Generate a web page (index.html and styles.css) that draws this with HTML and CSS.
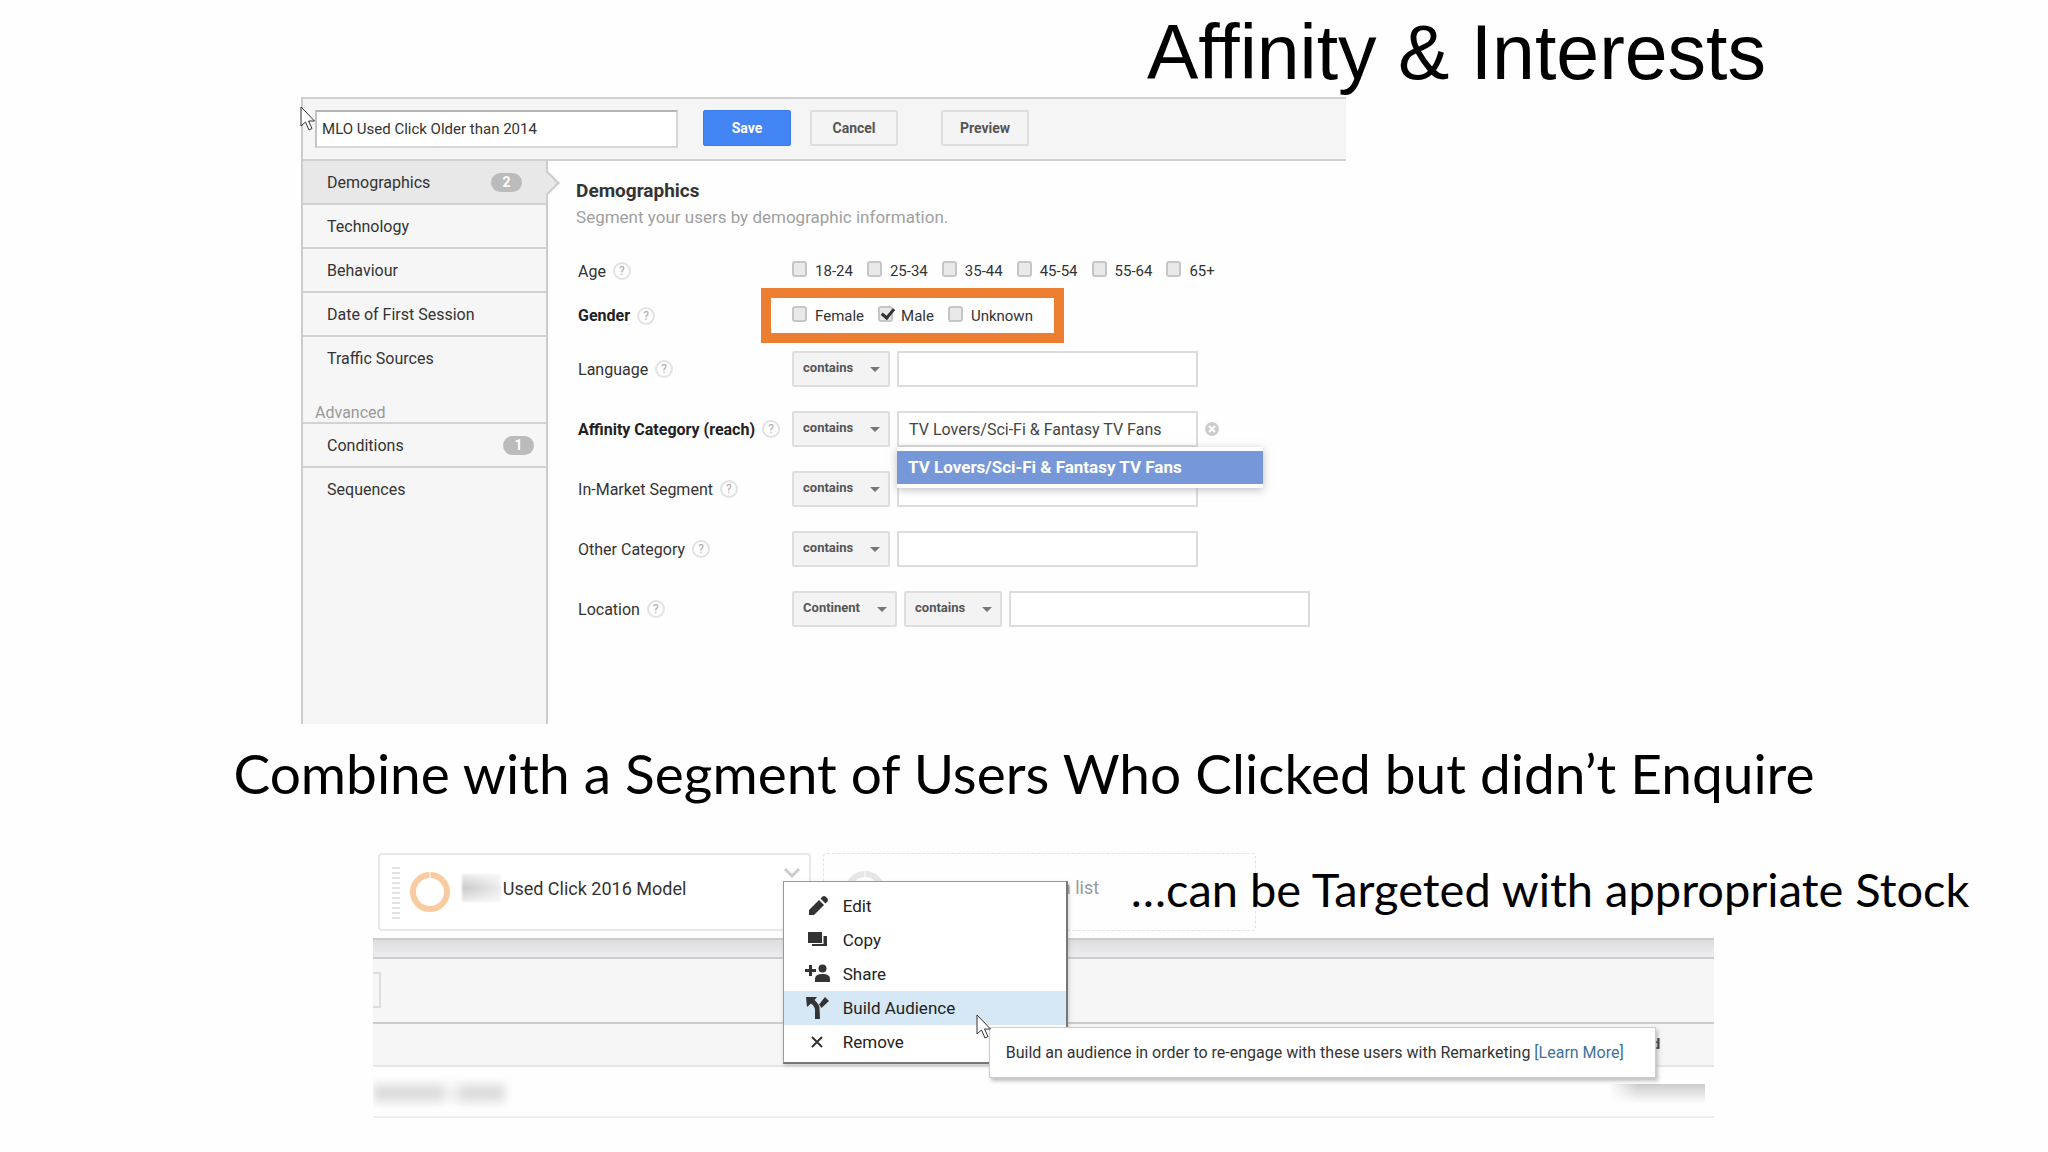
FILE: index.html
```html
<!DOCTYPE html>
<html lang="en">

<head>
    <meta charset="UTF-8">
    <meta name="viewport" content="width=device-width, initial-scale=1.0">
    <title>Affinity &amp; Interests</title>
    <link rel="stylesheet" href="styles.css">
</head>

<body>
    <h1 class="title">Affinity &amp; Interests</h1>

    <!-- segment builder -->
    <section class="builder">
        <svg class="pointer pointer-small" viewBox="0 0 16 25">
            <path d="M1 1v19l4.500-4 3.500 8 3-1.500-3.500-7.500h6z" />
        </svg>
        <header class="toolbar">
            <input class="segment-name" type="text" aria-label="Segment name" value="MLO Used Click Older than 2014">
            <button type="button" class="btn btn-save">Save</button>
            <button type="button" class="btn">Cancel</button>
            <button type="button" class="btn btn-preview">Preview</button>
        </header>
        <div class="builder-body">
            <nav class="sidebar">
                <a class="tab active" href="#demographics">Demographics <span class="count">2</span></a>
                <a class="tab" href="#technology">Technology</a>
                <a class="tab" href="#behaviour">Behaviour</a>
                <a class="tab" href="#first-session">Date of First Session</a>
                <a class="tab last" href="#traffic">Traffic Sources</a>
                <h3 class="advanced">Advanced</h3>
                <a class="tab conditions" href="#conditions">Conditions <span class="count">1</span></a>
                <a class="tab last" href="#sequences">Sequences</a>
            </nav>
            <form class="form">
                <h2 class="form-title">Demographics</h2>
                <p class="form-info">Segment your users by demographic information.</p>

                <div class="field checks-field">
                    <span class="label">Age <i class="help">?</i></span>
                    <div class="checks">
                        <label><input type="checkbox">18-24</label>
                        <label><input type="checkbox">25-34</label>
                        <label><input type="checkbox">35-44</label>
                        <label><input type="checkbox">45-54</label>
                        <label><input type="checkbox">55-64</label>
                        <label><input type="checkbox">65+</label>
                    </div>
                </div>
                <div class="field checks-field gender-field">
                    <span class="label strong">Gender <i class="help">?</i></span>
                    <div class="checks highlight">
                        <label><input type="checkbox">Female</label>
                        <label><input type="checkbox" checked>Male</label>
                        <label><input type="checkbox">Unknown</label>
                    </div>
                </div>
                <div class="field">
                    <label class="label" for="language">Language <i class="help">?</i></label>
                    <span class="select"><select aria-label="Language match"><option>contains</option></select></span>
                    <input class="text" type="text" id="language">
                </div>
                <div class="field">
                    <label class="label strong" for="affinity">Affinity Category (reach) <i class="help">?</i></label>
                    <span class="select"><select aria-label="Affinity match"><option>contains</option></select></span>
                    <div class="suggest">
                        <input class="text" type="text" id="affinity" value="TV Lovers/Sci-Fi &amp; Fantasy TV Fans">
                        <ul class="suggest-list">
                            <li>TV Lovers/Sci-Fi &amp; Fantasy TV Fans</li>
                        </ul>
                    </div>
                    <button type="button" class="clear" aria-label="Clear">
                        <svg viewBox="0 0 14 14">
                            <circle cx="7" cy="7" r="7" />
                            <path d="M4 4l6 6M10 4l-6 6" />
                        </svg>
                    </button>
                </div>
                <div class="field">
                    <label class="label" for="market">In-Market Segment <i class="help">?</i></label>
                    <span class="select"><select aria-label="In-market match"><option>contains</option></select></span>
                    <input class="text" type="text" id="market">
                </div>
                <div class="field">
                    <label class="label" for="other">Other Category <i class="help">?</i></label>
                    <span class="select"><select aria-label="Other match"><option>contains</option></select></span>
                    <input class="text" type="text" id="other">
                </div>
                <div class="field">
                    <label class="label" for="location">Location <i class="help">?</i></label>
                    <span class="select select-wide"><select aria-label="Location level"><option>Continent</option></select></span>
                    <span class="select"><select aria-label="Location match"><option>contains</option></select></span>
                    <input class="text" type="text" id="location">
                </div>
            </form>
        </div>
    </section>

    <p class="caption">Combine with a Segment of Users Who Clicked but didn’t Enquire</p>

    <!-- segment card with its menu open -->
    <section class="report">
        <div class="cards">
            <div class="card">
                <span class="grip"></span>
                <svg class="ring" viewBox="0 0 40 40">
                    <circle cx="20" cy="20" r="17" />
                    <path d="M20 0v7" />
                </svg>
                <span class="redacted"></span>
                <span class="card-name">Used Click 2016 Model</span>
                <svg class="chevron" viewBox="0 0 18 12">
                    <path d="M2 2l7 7 7-7" />
                </svg>
            </div>
            <div class="card card-empty">
                <svg class="ring ring-empty" viewBox="0 0 40 40">
                    <circle cx="20" cy="20" r="17" />
                    <path d="M20 0v7" />
                </svg>
                <span class="card-hint">n list</span>
            </div>
        </div>
        <div class="band"></div>
        <div class="panel"><span class="panel-box"></span></div>
        <div class="table-head"><b>d</b></div>
        <div class="table-row">
            <span class="smudge-left"></span>
            <span class="smudge-right"></span>
        </div>

        <p class="caption caption-side">…can be Targeted with appropriate Stock</p>

        <div class="menu">
            <button type="button">
                <svg viewBox="0 0 26 24">
                    <path d="M4 21v-5L14 6l5 5L9 21zM15.500 4.500l2-2q1.500-1 3 0l2 2q1 1.500 0 3l-2 2z" />
                </svg>Edit
            </button>
            <button type="button">
                <svg viewBox="0 0 26 24">
                    <path d="M3 4h14v11H3zM18.500 8H22v10H7v-2h11.500z" />
                </svg>Copy
            </button>
            <button type="button">
                <svg viewBox="0 0 26 24">
                    <path d="M4 3h3v4h4v3H7v4H4v-4H0V7h4zM10 20v-3q0-5 7.500-5t7.500 5v3z" />
                    <circle cx="17.500" cy="6.500" r="4" />
                </svg>Share
            </button>
            <button type="button" class="hover">
                <svg viewBox="0 0 26 24">
                    <path d="M1 1h11L9.500 4Q14 8 14.500 11.500L15 23h-5V14q0-3.500-4-6.500L2 11zM14 8.500L20 1l4 4-7.500 7z" />
                </svg>Build Audience
            </button>
            <button type="button">
                <svg class="cross" viewBox="0 0 26 24">
                    <path d="M7 7l10 10M17 7L7 17" />
                </svg>Remove
            </button>
        </div>
        <div class="tooltip">Build an audience in order to re-engage with these users with Remarketing <a href="#learn">[Learn More]</a></div>
        <svg class="pointer pointer-big" viewBox="0 0 16 25">
            <path d="M1 1v19l4.500-4 3.500 8 3-1.500-3.500-7.500h6z" />
        </svg>
    </section>
</body>

</html>
```
FILE: styles.css
```css
* {
    box-sizing: border-box;
}

body {
    background-color: #fefefe;
    margin: 0;
    font-family: Roboto, sans-serif;
    font-size: 16px;
    color: #333;
    overflow-x: hidden;
}

input,
button,
select {
    font-family: inherit;
    margin: 0;
}

.title {
    margin: 0;
    padding: 8px 0 0 56%;
    font-family: "Liberation Sans", Arial, sans-serif;
    font-size: 77px;
    font-weight: 400;
    line-height: 89px;
    color: #000;
    white-space: nowrap;
}

.caption {
    margin: 0;
    font-family: Lato, sans-serif;
    font-size: 55px;
    line-height: 64px;
    text-align: center;
    color: #000;
    white-space: nowrap;
}

/* segment builder */
.builder {
    position: relative;
    width: 51%;
    margin-left: 14.7%;
    border-top: 2px solid #d0d0d2;
    border-left: 2px solid #ccc;
}

.toolbar {
    display: flex;
    align-items: flex-start;
    height: 62px;
    padding: 11px 12px;
    background-color: #f5f5f6;
    border-bottom: 2px solid #d0d0d2;
}

.segment-name {
    width: 363px;
    height: 38px;
    margin-right: 25px;
    padding: 0 5px;
    border: 2px solid #d6d6d6;
    border-top-color: #b4b4b4;
    border-left-color: #c4c4c4;
    background-color: #fff;
    font-size: 15px;
    color: #333;
}

.btn {
    width: 88px;
    height: 36px;
    margin-right: 19px;
    padding: 0;
    border: 2px solid #dedede;
    border-radius: 2px;
    background-color: #f4f4f4;
    font-size: 14px;
    font-weight: 700;
    color: #555;
}

.btn-save {
    border: 1px solid #3b7be8;
    background-color: #4485f5;
    color: #fff;
}

.btn-preview {
    margin-left: 24px;
}

.builder-body {
    display: flex;
}

.sidebar {
    width: 245px;
    height: 563px;
    flex-shrink: 0;
    background-color: #f6f6f7;
    border-right: 2px solid #ccc;
}

.tab {
    position: relative;
    display: flex;
    align-items: center;
    justify-content: space-between;
    height: 44px;
    padding: 0 24px;
    border-bottom: 2px solid #d2d2d2;
    color: #333;
    text-decoration: none;
}

.tab.last {
    border-bottom-color: transparent;
}

.tab.active {
    background-color: #e8e8e8;
}

/* arrow that points at the form */
.tab.active::after {
    content: "";
    position: absolute;
    top: 13px;
    right: -10px;
    width: 16px;
    height: 16px;
    background-color: #e8e8e8;
    border-top: 2px solid #ccc;
    border-right: 2px solid #ccc;
    transform: rotate(45deg);
}

.tab.conditions {
    padding-right: 12px;
}

.count {
    width: 31px;
    border-radius: 10px;
    background-color: #bbb;
    font-size: 14px;
    font-weight: 700;
    line-height: 19px;
    text-align: center;
    color: #fff;
}

.advanced {
    margin: 0;
    padding: 23px 0 0 12px;
    border-bottom: 2px solid #d2d2d2;
    font-size: 16px;
    font-weight: 400;
    line-height: 18px;
    color: #999;
}

.form {
    flex-grow: 1;
    padding: 17px 0 0 28px;
}

.form-title {
    margin: 0;
    font-size: 19px;
    line-height: 26px;
    color: #333;
}

.form-info {
    margin: 0 0 28px;
    font-size: 17px;
    line-height: 26px;
    color: #a0a0a0;
}

.field {
    display: flex;
    align-items: center;
    gap: 7px;
    height: 36px;
    margin-bottom: 24px;
    padding-left: 2px;
}

.label {
    display: flex;
    align-items: center;
    gap: 7px;
    width: 207px;
    flex-shrink: 0;
    white-space: nowrap;
}

.label.strong {
    font-weight: 700;
    color: #222;
}

.help {
    width: 18px;
    height: 18px;
    flex-shrink: 0;
    border: 2px solid #e2e2e2;
    border-radius: 50%;
    font-size: 12px;
    font-style: normal;
    font-weight: 400;
    line-height: 14px;
    text-align: center;
    color: #aaa;
}

.checks-field {
    height: 26px;
    margin-bottom: 4px;
}

.gender-field {
    height: 55px;
    margin-bottom: 8px;
}

.checks {
    display: flex;
    gap: 14px;
    font-size: 15px;
}

.checks label {
    display: flex;
    align-items: center;
    gap: 8px;
}

.checks input {
    appearance: none;
    width: 15px;
    height: 16px;
    margin-bottom: 4px;
    border: 2px solid #c6c6c6;
    border-radius: 3px;
    background-color: #e9e9e9;
}

.checks input:checked::after {
    content: "";
    display: block;
    width: 5px;
    height: 10px;
    margin: -2px 0 0 4px;
    border: solid #333;
    border-width: 0 3px 3px 0;
    transform: rotate(40deg);
}

.highlight {
    height: 55px;
    margin-left: -31px;
    padding: 0 21px;
    border: 10px solid #ed7d31;
}

.select {
    position: relative;
    width: 98px;
    flex-shrink: 0;
}

.select-wide {
    width: 105px;
}

.select::after {
    content: "";
    position: absolute;
    top: 16px;
    right: 10px;
    border: 5px solid transparent;
    border-top-color: #777;
    border-bottom: none;
    pointer-events: none;
}

.select select {
    appearance: none;
    width: 100%;
    height: 36px;
    padding: 0 0 3px 9px;
    border: 2px solid #dedede;
    border-radius: 2px;
    background-color: #f3f3f4;
    font-size: 13px;
    font-weight: 700;
    color: #555;
}

.text {
    display: block;
    width: 301px;
    height: 36px;
    padding: 0 10px;
    border: 2px solid #dcdcdc;
    background-color: #fff;
    font-size: 16px;
    color: #444;
}

.suggest {
    position: relative;
}

.suggest-list {
    position: absolute;
    top: 36px;
    left: 0;
    z-index: 2;
    width: 366px;
    margin: 0;
    padding: 4px 0;
    background-color: #fff;
    box-shadow: 0 2px 8px #8888;
    list-style: none;
}

.suggest-list li {
    padding: 0 11px;
    background-color: #7798d8;
    font-weight: 700;
    font-size: 17px;
    line-height: 33px;
    color: #fff;
}

.clear {
    width: 14px;
    height: 14px;
    padding: 0;
    border: none;
    background: none;
}

.clear svg {
    display: block;
    fill: #ccc;
    stroke: #fff;
    stroke-width: 2;
}

.clear circle {
    stroke: none;
}

.builder + .caption {
    padding: 17px 0 48px;
}

/* report with the segment cards */
.report {
    position: relative;
    width: 65.5%;
    margin-left: 18.2%;
}

.cards {
    display: flex;
    gap: 12px;
    padding: 0 0 7px 5px;
}

.card {
    position: relative;
    display: flex;
    align-items: flex-start;
    width: 433px;
    height: 78px;
    padding: 18px 12px;
    border: 2px solid #e8e8e8;
    border-radius: 4px;
    background-color: #fff;
}

.card-empty {
    border: 1px dashed #e4e4e4;
    background: none;
}

.grip {
    width: 8px;
    height: 54px;
    margin: -6px 10px 0 0;
    background: repeating-linear-gradient(#e2e2e2 0 2px, transparent 2px 5px);
}

.ring {
    width: 40px;
    height: 40px;
    margin-top: -1px;
    fill: none;
    stroke: #f9cba0;
    stroke-width: 6;
}

.ring path {
    stroke: #fff;
    stroke-width: 1;
}

.ring-empty {
    margin: -1px 0 0 9px;
    stroke: #e6e6e6;
}

.redacted {
    width: 39px;
    height: 28px;
    margin: 1px 2px 0 12px;
    background: linear-gradient(90deg, #fff0, #fffa), linear-gradient(#ededed, #c8c8c8 50%, #ededed);
    filter: blur(1px);
}

.card-name,
.card-hint {
    font-size: 18px;
    line-height: 32px;
    white-space: nowrap;
}

.card-hint {
    margin-left: 176px;
    color: #999;
}

.chevron {
    position: absolute;
    top: 12px;
    right: 8px;
    width: 18px;
    fill: none;
    stroke: #ccc;
    stroke-width: 3;
}

.band {
    height: 19px;
    border-top: 2px solid #ccc;
    background: linear-gradient(#dedee0, #ededef);
}

.panel {
    height: 67px;
    padding-top: 13px;
    border-top: 2px solid #ccc;
    border-bottom: 2px solid #ccc;
    background-color: #f6f6f7;
}

.panel-box {
    display: block;
    width: 8px;
    height: 36px;
    border: 2px solid #ddd;
    border-left: none;
}

.table-head {
    height: 43px;
    padding: 11px 54px 0 0;
    border-bottom: 2px solid #e6e6e6;
    background-color: #f6f6f7;
    font-size: 15px;
    text-align: right;
}

.table-row {
    display: flex;
    justify-content: space-between;
    height: 51px;
    padding: 17px 9px 0 0;
    border-bottom: 2px solid #eee;
    overflow: hidden;
}

.smudge-left {
    width: 132px;
    height: 18px;
    background: linear-gradient(90deg, #ddd 0 50%, #f2f2f2 57% 62%, #ddd 68%);
    filter: blur(5px);
}

.smudge-right {
    width: 96px;
    height: 20px;
    background: linear-gradient(90deg, #fefefe, #fefefe00 30%), linear-gradient(#ccc, #fefefe);
}

.caption-side {
    position: absolute;
    top: 4px;
    left: 758px;
    font-size: 47px;
}

.menu {
    position: absolute;
    top: 28px;
    left: 410px;
    width: 285px;
    padding: 7px 0 3px;
    border: 1px solid #999;
    border-right: 2px solid #777;
    border-bottom: 2px solid #777;
    background-color: #fff;
    box-shadow: 1px 2px 4px #8886;
}

.menu button {
    display: flex;
    align-items: center;
    gap: 12px;
    width: 100%;
    height: 34px;
    padding: 0 0 0 21px;
    border: none;
    background: none;
    font-size: 17px;
    color: #222;
}

.menu button.hover {
    background-color: #d6e7f5;
}

.menu svg {
    width: 26px;
    height: 24px;
    fill: #333;
}

.menu .cross {
    stroke: #333;
    stroke-width: 2;
}

.tooltip {
    position: absolute;
    top: 174px;
    left: 616px;
    min-width: 667px;
    padding: 0 16px;
    border: 1px solid #ccc;
    background-color: #fff;
    box-shadow: 2px 3px 4px #8888;
    font-size: 16px;
    line-height: 49px;
    color: #333;
    white-space: nowrap;
}

.tooltip a {
    color: #3f7098;
    text-decoration: none;
}

.pointer {
    position: absolute;
    fill: #fff;
    stroke: #333;
    stroke-width: 1;
}

.pointer-small {
    top: 7px;
    left: -3px;
    width: 16px;
}

.pointer-big {
    top: 161px;
    left: 603px;
    width: 16px;
}
```
